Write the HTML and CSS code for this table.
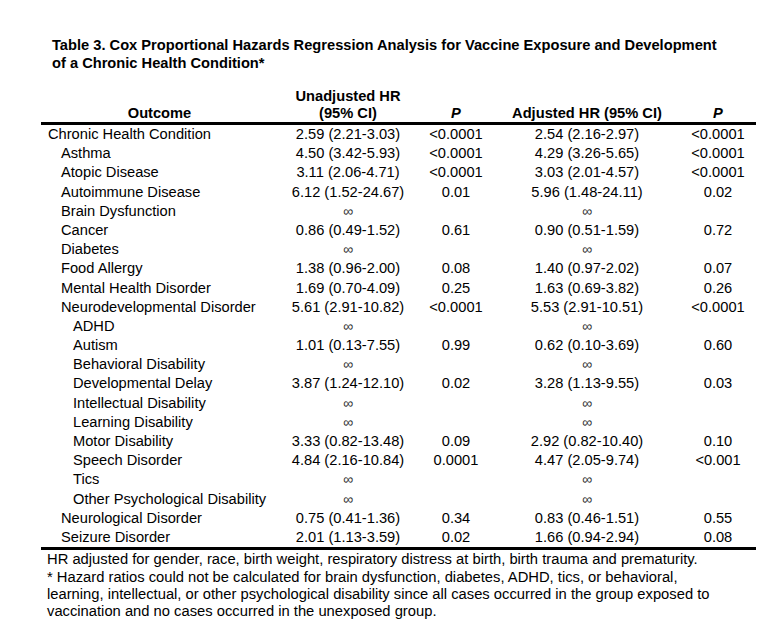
FILE: index.html
```html
<!DOCTYPE html>
<html lang="en">
<head>
<meta charset="utf-8">
<title>Table 3</title>
<link rel="stylesheet" href="styles.css">
</head>
<body>
<div class="page">
  <h1 class="title">Table 3. Cox Proportional Hazards Regression Analysis for Vaccine Exposure and Development of a Chronic Health Condition*</h1>
  <table class="hr-table">
    <colgroup>
      <col class="c-outcome">
      <col class="c-unadj">
      <col class="c-p">
      <col class="c-adj">
      <col class="c-p2">
    </colgroup>
    <thead>
      <tr>
        <th>Outcome</th>
        <th>Unadjusted HR<br>(95% CI)</th>
        <th><i>P</i></th>
        <th>Adjusted HR (95% CI)</th>
        <th><i>P</i></th>
      </tr>
    </thead>
    <tbody>
      <tr><td class="l0">Chronic Health Condition</td><td>2.59 (2.21-3.03)</td><td>&lt;0.0001</td><td>2.54 (2.16-2.97)</td><td>&lt;0.0001</td></tr>
      <tr><td class="l1">Asthma</td><td>4.50 (3.42-5.93)</td><td>&lt;0.0001</td><td>4.29 (3.26-5.65)</td><td>&lt;0.0001</td></tr>
      <tr><td class="l1">Atopic Disease</td><td>3.11 (2.06-4.71)</td><td>&lt;0.0001</td><td>3.03 (2.01-4.57)</td><td>&lt;0.0001</td></tr>
      <tr><td class="l1">Autoimmune Disease</td><td>6.12 (1.52-24.67)</td><td>0.01</td><td>5.96 (1.48-24.11)</td><td>0.02</td></tr>
      <tr><td class="l1">Brain Dysfunction</td><td class="inf">∞</td><td></td><td class="inf">∞</td><td></td></tr>
      <tr><td class="l1">Cancer</td><td>0.86 (0.49-1.52)</td><td>0.61</td><td>0.90 (0.51-1.59)</td><td>0.72</td></tr>
      <tr><td class="l1">Diabetes</td><td class="inf">∞</td><td></td><td class="inf">∞</td><td></td></tr>
      <tr><td class="l1">Food Allergy</td><td>1.38 (0.96-2.00)</td><td>0.08</td><td>1.40 (0.97-2.02)</td><td>0.07</td></tr>
      <tr><td class="l1">Mental Health Disorder</td><td>1.69 (0.70-4.09)</td><td>0.25</td><td>1.63 (0.69-3.82)</td><td>0.26</td></tr>
      <tr><td class="l1">Neurodevelopmental Disorder</td><td>5.61 (2.91-10.82)</td><td>&lt;0.0001</td><td>5.53 (2.91-10.51)</td><td>&lt;0.0001</td></tr>
      <tr><td class="l2">ADHD</td><td class="inf">∞</td><td></td><td class="inf">∞</td><td></td></tr>
      <tr><td class="l2">Autism</td><td>1.01 (0.13-7.55)</td><td>0.99</td><td>0.62 (0.10-3.69)</td><td>0.60</td></tr>
      <tr><td class="l2">Behavioral Disability</td><td class="inf">∞</td><td></td><td class="inf">∞</td><td></td></tr>
      <tr><td class="l2">Developmental Delay</td><td>3.87 (1.24-12.10)</td><td>0.02</td><td>3.28 (1.13-9.55)</td><td>0.03</td></tr>
      <tr><td class="l2">Intellectual Disability</td><td class="inf">∞</td><td></td><td class="inf">∞</td><td></td></tr>
      <tr><td class="l2">Learning Disability</td><td class="inf">∞</td><td></td><td class="inf">∞</td><td></td></tr>
      <tr><td class="l2">Motor Disability</td><td>3.33 (0.82-13.48)</td><td>0.09</td><td>2.92 (0.82-10.40)</td><td>0.10</td></tr>
      <tr><td class="l2">Speech Disorder</td><td>4.84 (2.16-10.84)</td><td>0.0001</td><td>4.47 (2.05-9.74)</td><td>&lt;0.001</td></tr>
      <tr><td class="l2">Tics</td><td class="inf">∞</td><td></td><td class="inf">∞</td><td></td></tr>
      <tr><td class="l2">Other Psychological Disability</td><td class="inf">∞</td><td></td><td class="inf">∞</td><td></td></tr>
      <tr><td class="l1">Neurological Disorder</td><td>0.75 (0.41-1.36)</td><td>0.34</td><td>0.83 (0.46-1.51)</td><td>0.55</td></tr>
      <tr><td class="l1">Seizure Disorder</td><td>2.01 (1.13-3.59)</td><td>0.02</td><td>1.66 (0.94-2.94)</td><td>0.08</td></tr>
    </tbody>
  </table>
  <div class="notes">
    <p>HR adjusted for gender, race, birth weight, respiratory distress at birth, birth trauma and prematurity.</p>
    <p>* Hazard ratios could not be calculated for brain dysfunction, diabetes, ADHD, tics, or behavioral, learning, intellectual, or other psychological disability since all cases occurred in the group exposed to vaccination and no cases occurred in the unexposed group.</p>
  </div>
</div>
</body>
</html>
```
FILE: styles.css
```css
html, body {
  margin: 0;
  padding: 0;
  background: #ffffff;
}

body {
  font-family: "Liberation Sans", Arial, sans-serif;
  color: #000000;
}

.page {
  width: 779px;
  padding: 36px 0 0 41px;
  box-sizing: border-box;
}

.title {
  margin: 0 0 16px 11px;
  width: 682px;
  font-size: 14.67px;
  line-height: 18px;
  font-weight: bold;
}

.hr-table {
  border-collapse: collapse;
  table-layout: fixed;
  width: 715px;
  font-size: 14.67px;
}

.c-outcome { width: 237px; }
.c-unadj { width: 140px; }
.c-p { width: 76px; }
.c-adj { width: 186px; }
.c-p2 { width: 76px; }

.hr-table th {
  font-weight: bold;
  line-height: 17px;
  padding: 0;
  vertical-align: bottom;
  text-align: center;
  border-bottom: 3px solid #000000;
}

.hr-table td {
  height: 18.18px;
  line-height: 18.18px;
  padding: 0 0 1px 0;
  text-align: center;
  white-space: nowrap;
  vertical-align: middle;
}

.hr-table tbody tr:last-child td {
  border-bottom: 3px solid #000000;
}

.hr-table td.l0 { text-align: left; padding-left: 7px; }
.hr-table td.l1 { text-align: left; padding-left: 20px; }
.hr-table td.l2 { text-align: left; padding-left: 32px; }

.hr-table td.inf {
  color: #333333;
  font-size: 14px;
}

.notes {
  padding: 1px 0 0 6px;
  width: 668px;
  font-size: 14.75px;
  line-height: 17.4px;
}

.notes p {
  margin: 0;
}
```
